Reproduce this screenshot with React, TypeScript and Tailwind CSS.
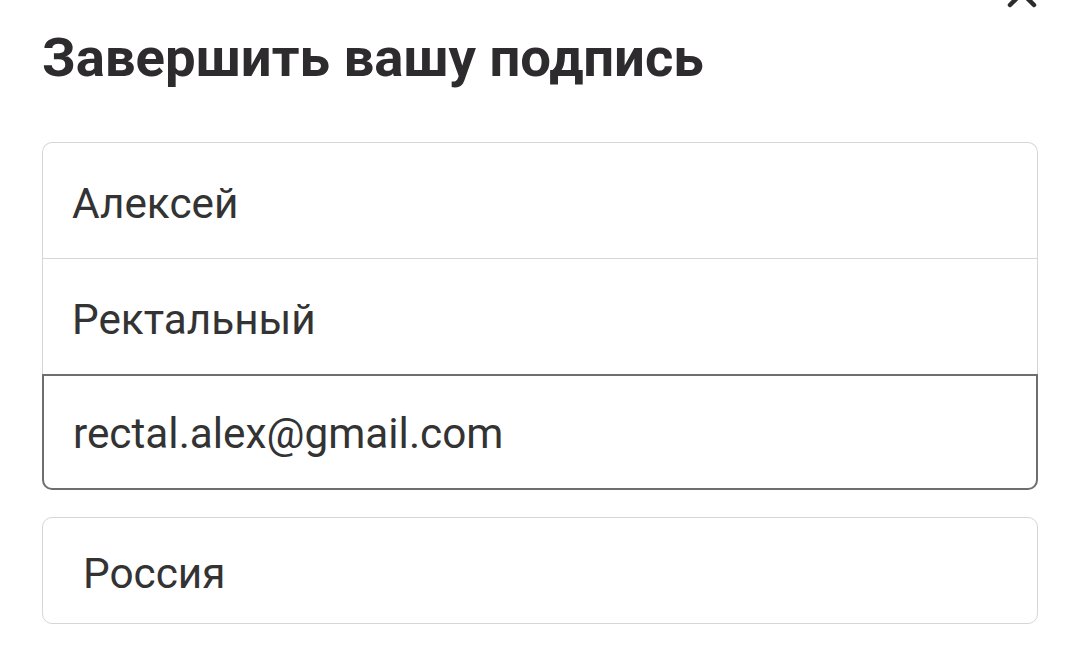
import React from "react";

const Field = ({ value, className }: { value: string; className: string }) => (
  <div className={`flex items-center ${className}`}>
    <span className="text-[42.3px] leading-none text-[#333333]">{value}</span>
  </div>
);

export default function App() {
  return (
    <div
      className="relative h-[646px] w-[1080px] overflow-hidden bg-white px-[42px]"
      style={{ fontFamily: "Roboto, 'Liberation Sans', sans-serif" }}
    >
      <button className="absolute right-[43px] top-[-22px] text-[#2d2b2d]">
        <svg width="30" height="30" viewBox="0 0 30 30" fill="none">
          <path d="M3 3L27 27M27 3L3 27" stroke="currentColor" strokeWidth="4.5" strokeLinecap="round" />
        </svg>
      </button>

      <h1 className="pt-[27px] text-[54.5px] font-bold leading-[60px] text-[#2d2b2d]">
        Завершить вашу подпись
      </h1>

      <div className="mt-[55px] flex flex-col">
        <Field
          value="Алексей"
          className="h-[116px] rounded-t-[10px] border-x-[1.5px] border-t-[1.5px] border-[#d6d6d6] pl-[29px] pt-[8px]"
        />
        <Field
          value="Ректальный"
          className="h-[116px] border-x-[1.5px] border-t-[1.5px] border-[#d6d6d6] pl-[29px] pt-[8px]"
        />
        <Field
          value="rectal.alex@gmail.com"
          className="h-[116px] rounded-b-[10px] border-2 border-[#6e6e6e] pl-[29px] pt-[5px]"
        />
      </div>

      <Field
        value="Россия"
        className="mt-[27px] h-[107px] rounded-[10px] border-[1.5px] border-[#d6d6d6] pl-[40px] pt-[8px]"
      />
    </div>
  );
}
